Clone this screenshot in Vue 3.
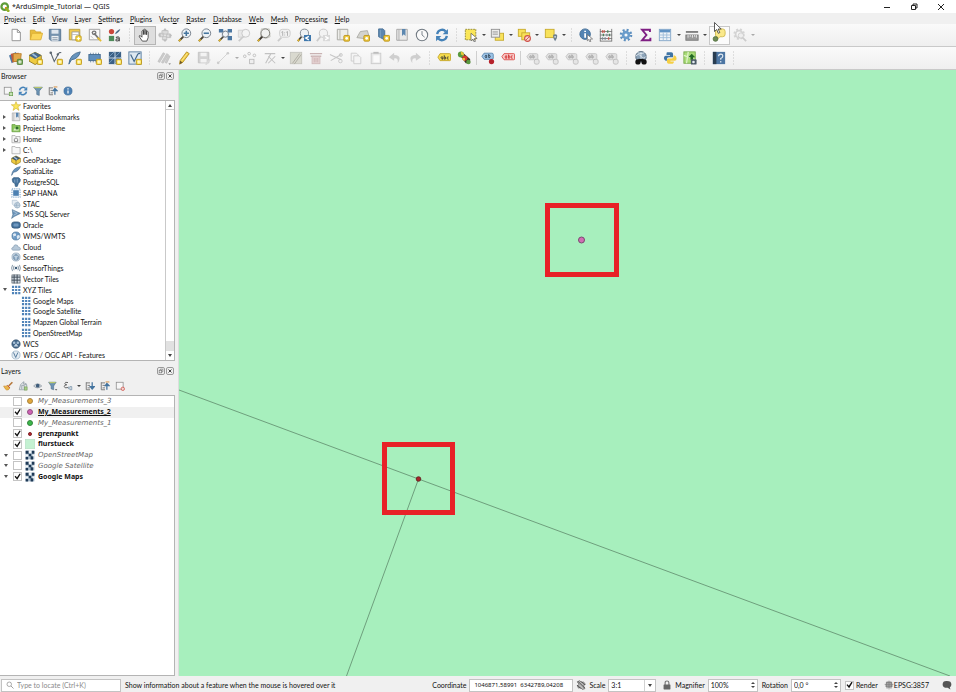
<script setup>
import { ref } from 'vue'

const icons = {
  logo: '<circle cx="7.5" cy="7.5" r="5.200" fill="none" stroke="#5f9c39" stroke-width="3.600"/><path d="M8 8h3l4 5v3h-3l-4-5z" fill="#93b023"/><path d="M8 8h3l-3 3z" fill="#ee7913"/>',
  page: '<path d="M3.5 1.500h6l3.500 3.500v9.500h-9.500z" fill="#fff" stroke="#8a8a8a"/><path d="M9.500 1.500v3.500h3.500" fill="none" stroke="#8a8a8a"/>',
  folder: '<path d="M1.500 13.500v-11h5l1.500 2h5.500v2" fill="#e8bd3d" stroke="#d0a327"/><path d="M1.500 13.500l2-7.500h12l-2 7.500z" fill="#fbd65a" stroke="#dcae33"/>',
  save: '<path d="M1.500 1.500h13v13h-11l-2-2z" fill="#7491ad" stroke="#52718f"/><path d="M4 2h8v4.500h-8z" fill="#dfe6ee"/><path d="M4 9h8v5.500h-8z" fill="#eef1f4"/><path d="M5 11h6M5 13h6" stroke="#8797a8"/>',
  layoutNew: '<path d="M1.500 1.500h12v12h-12z" fill="#efc94e" stroke="#b59a3e"/><path d="M4.500 4.500h8v9h-8z" fill="#fff" stroke="#999"/><path d="M4.500 7.500h8" stroke="#bbb"/><rect x="9" y="9" width="6" height="6" rx="1" fill="#f8dd4c" stroke="#bb9316"/><path d="M12 10v4M10 12h4" stroke="#fff"/>',
  layoutMgr: '<path d="M1.500 1.500h12v12h-12z" fill="#fafafa" stroke="#999"/><path d="M4 5l2 2M3 9l3 3" stroke="#bbb"/><path d="M7 6l6 7" stroke="#777" stroke-width="2"/><circle cx="7" cy="5.500" r="2" fill="none" stroke="#777" stroke-width="1.500"/><path d="M11 11l4 4" stroke="#e5bd33" stroke-width="2"/>',
  style: '<circle cx="4" cy="4" r="3" fill="#c9473b"/><rect x="1" y="9" width="6" height="6" fill="#4e8a5a"/><path d="M8 7q1-4 6-6q-1 4-6 6z" fill="#4b6984"/><path d="M9 11q4-2 4 1v3M13 12.500q-4-.5-4 1.500q1 2 4-.5" fill="none" stroke="#555" stroke-width="1.300"/>',
  hand: '<path d="M5 15l-3.500-5q-.5-2 1.500-1l1.500 1.500v-7q.8-1.500 1.700 0v4-5.500q1-1.500 1.800 0v5.500-5q1-1.300 1.800.2v5-3.500q1.200-1.200 1.800.3v6.500l-1.600 4z" fill="#fff" stroke="#333" stroke-width=".9"/>',
  panSel: '<path d="M4.500 3h7v4h-7zM1.500 6h5v4h-5zM9.500 7h5v4h-5zM5 9.500h5v4h-5z" fill="#dcdcdc" stroke="#c2c2c2"/><path d="M8 0l2.500 3h-5zM8 16l2.500-3h-5zM0 8l3-2.500v5zM16 8.500l-3-2.500v5z" fill="#bdbdbd"/>',
  zoomIn: '<circle cx="9.500" cy="6" r="5" fill="#eef3f7" stroke="#6b7682"/><path d="M6 10l-5 5" stroke="#4a4436" stroke-width="2.200"/><path d="M3 13l-2 2" stroke="#e2b62e" stroke-width="2"/><path d="M9.500 3v6M6.500 6h6" stroke="#44759f" stroke-width="1.800"/>',
  zoomOut: '<circle cx="9.500" cy="6" r="5" fill="#eef3f7" stroke="#6b7682"/><path d="M6 10l-5 5" stroke="#4a4436" stroke-width="2.200"/><path d="M3 13l-2 2" stroke="#e2b62e" stroke-width="2"/><path d="M6.500 6h6" stroke="#44759f" stroke-width="1.800"/>',
  zoomFull: '<rect x="4" y="3" width="9" height="8" fill="#cfdbe7"/><path d="M1 1h5v4h-5zM11 1h5v4h-5zM11 9h5v5h-5z" fill="#4b77a2"/><circle cx="8.500" cy="7" r="3.500" fill="#f0f4f7" stroke="#6b7682"/><path d="M6 10l-5 5" stroke="#4a4436" stroke-width="2"/><path d="M3 13l-2 2" stroke="#e2b62e" stroke-width="2"/>',
  zoomGray: '<path d="M1.500 2.500h7v8h-7z" fill="#e8e8e8" stroke="#d0d0d0"/><circle cx="10" cy="6" r="4.500" fill="#f4f4f4" stroke="#c4c4c4"/><path d="M7 10l-5 5" stroke="#cbcbcb" stroke-width="2"/>',
  zoomLayer: '<path d="M5 1h9l1 9-5 2-6-2z" fill="#e1e1dc" stroke="#c4c4bd"/><circle cx="9.500" cy="6" r="5" fill="#f1f2f0" stroke="#75756f"/><path d="M6 10l-5 5" stroke="#3d3830" stroke-width="2.200"/><path d="M3 13l-2 2" stroke="#e2b62e" stroke-width="2"/>',
  zoomNative: '<rect x="3" y="1.500" width="12" height="9" rx="3" fill="#f1f1f1" stroke="#c9c9c9"/><path d="M5 5l1.500-1v5M10.500 5l1.500-1v5M8.700 5v1M8.700 7.500v1" fill="none" stroke="#aaa"/><path d="M5 11l-4 4" stroke="#cbcbcb" stroke-width="2"/>',
  zoomLast: '<circle cx="8.500" cy="6" r="4.700" fill="#eef1f3" stroke="#77808a"/><path d="M5 10l-4 5" stroke="#4a4436" stroke-width="2"/><path d="M2.500 13l-1.500 2" stroke="#e2b62e" stroke-width="2"/><rect x="8" y="8" width="8" height="7" fill="#3f78ad"/><path d="M13.500 9.500l-3.500 2 3.500 2" fill="none" stroke="#fff" stroke-width="1.500"/>',
  zoomNext: '<circle cx="8.500" cy="6" r="4.700" fill="#f3f3f3" stroke="#c4c4c4"/><path d="M5 10l-4 5" stroke="#cbcbcb" stroke-width="2"/><rect x="8" y="8" width="8" height="7" fill="#d9d9d9"/><path d="M10.500 9.500l3.500 2-3.500 2" fill="none" stroke="#fff" stroke-width="1.500"/>',
  newMap: '<path d="M1.500 1.500h12v12h-12z" fill="#ededea" stroke="#a4a49e"/><path d="M4.500 2v11" stroke="#b0b0aa"/><rect x="9" y="8.500" width="6.500" height="6.500" rx="1" fill="#efcb41" stroke="#b88f17"/><circle cx="12.200" cy="11.800" r="1.500" fill="#fff"/>',
  new3d: '<path d="M1 11l4-7 8-1 2 7-6 2z" fill="#d3d3ce" stroke="#a9a9a3"/><rect x="9" y="8.500" width="6.500" height="6.500" rx="1" fill="#efcb41" stroke="#b88f17"/><circle cx="12.200" cy="11.800" r="1.500" fill="#fff"/>',
  newBm: '<path d="M3 1h5l2 2v11l-3-2-4-2z" fill="#5c87b0" stroke="#456d92"/><path d="M5 2v9" stroke="#7ea3c5"/><rect x="9" y="8.500" width="6.500" height="6.500" rx="1" fill="#efcb41" stroke="#b88f17"/><circle cx="12.200" cy="11.800" r="1.500" fill="#fff"/>',
  bookmark: '<path d="M2 1.500h12v12.500h-12z" fill="#e9e9e9" stroke="#a0a0a0"/><path d="M4.500 2v12" stroke="#aaa"/><path d="M8 1h4v8l-2-2-2 2z" fill="#5c87b0"/>',
  clock: '<circle cx="8" cy="8" r="6.500" fill="#fafafa" stroke="#6f7880" stroke-width="1.200"/><path d="M8 3.500v4.500l3 2.500" fill="none" stroke="#6f7880"/>',
  refresh: '<path d="M2.500 7a5.600 5.600 0 0 1 9.800-3" fill="none" stroke="#4582b8" stroke-width="2.600"/><path d="M14.800 1v6h-6z" fill="#4582b8"/><path d="M13.500 9a5.600 5.600 0 0 1-9.800 3" fill="none" stroke="#4582b8" stroke-width="2.600"/><path d="M1.200 15v-6h6z" fill="#4582b8"/>',
  select: '<rect x="1.500" y="1.500" width="12" height="12" fill="#fae657" stroke="#8d8432" stroke-dasharray="2 1"/><path d="M8 6l7 6-3.500.3 1.500 3-1.500.5-1.200-3-2.300 1.800z" fill="#fff" stroke="#555" stroke-width=".8"/>',
  selForm: '<rect x="6" y="6" width="9.500" height="8" fill="#f8e25a" stroke="#c6a92a"/><rect x="1.500" y="1.500" width="9.500" height="9" fill="#ececec" stroke="#8d8d8d"/><path d="M3 4.500h6M3 7h6" stroke="#8d8d8d"/>',
  deselect: '<rect x="1.500" y="1.500" width="8" height="8" fill="#f8e25a" stroke="#c6a92a"/><rect x="5.500" y="5.500" width="9" height="8" fill="#f8e25a" stroke="#c6a92a"/><circle cx="12" cy="12" r="3.300" fill="#f6d5cf" stroke="#cf4f47" stroke-width="1.200"/><path d="M10 14l4-4" stroke="#cf4f47"/>',
  selLoc: '<rect x="1.500" y="1.500" width="10" height="9.500" fill="#f8e25a" stroke="#c6a92a"/><path d="M10.500 10a2.300 2.300 0 1 1 4.500 0q0 2-2.300 5q-2.200-3-2.200-5z" fill="#6c7f8f"/><circle cx="12.700" cy="10" r="1" fill="#dfe5ea"/>',
  identify: '<circle cx="7" cy="7" r="6" fill="#5484b3" stroke="#3f6a94"/><path d="M7 6v5M7 3v1.700" stroke="#fff" stroke-width="2"/><path d="M9.500 7.500l6 5-3 .3 1 2.500-1.300.4-1-2.600-1.700 1.600z" fill="#fff" stroke="#666" stroke-width=".8"/>',
  abacus: '<path d="M1.500 1v14M14.500 1v14M1 4h14M1 8h14M1 12h14M1 15h14" stroke="#777"/><path d="M4 2.500v3M6 2.500v3M11 10.500v3" stroke="#c2554a" stroke-width="1.500"/><path d="M10 2.500v3M5 6.500v3M12 6.500v3" stroke="#4c8258" stroke-width="1.500"/><path d="M4 10.500v3M7 10.500v3M9 6.500v3" stroke="#7d8a95" stroke-width="1.500"/>',
  gear: '<circle cx="8" cy="8" r="5.700" fill="none" stroke="#5d8fbf" stroke-width="3" stroke-dasharray="2.200 2.276"/><circle cx="8" cy="8" r="4.800" fill="#6a9ccb"/><circle cx="8" cy="8" r="1.800" fill="#f5f8fa"/>',
  sigma: '<path d="M12.500 4.500v-2.500h-9l5 6-5 6h9.500v-3" fill="none" stroke="#7f1e83" stroke-width="2.200"/>',
  table: '<rect x="1.500" y="1.500" width="13" height="13" fill="#eef3f8" stroke="#7fa3c6"/><path d="M2 3.500h12" stroke="#5f92c3" stroke-width="3"/><path d="M6 5v9M10 5v9M2 8h12M2 11h12" stroke="#9dbbd8"/>',
  ruler: '<path d="M1 4.500h14" stroke="#777" stroke-width="2"/><rect x="1" y="8" width="14" height="6" fill="#9b9b9b" stroke="#777"/><path d="M3.500 8v3M6 8v2M8.500 8v3M11 8v2M13 8v3" stroke="#eee"/>',
  tips: '<path d="M4 3q0-2 2-2h6q3 0 3 3v3q0 3-3 3h-3l-3 3q0-2 0-3q-2 0-2-2z" fill="#fae98b" stroke="#cfb94f"/><circle cx="4" cy="12.500" r="2.700" fill="#6e8b58" stroke="#54713f"/>',
  gearGray: '<circle cx="7" cy="7" r="5.300" fill="none" stroke="#d4d4d4" stroke-width="2.500" stroke-dasharray="2.200 2"/><circle cx="7" cy="7" r="4" fill="none" stroke="#d4d4d4" stroke-width="2"/><circle cx="9" cy="8.500" r="3" fill="#eee" stroke="#ccc"/><path d="M11 11l4 4" stroke="#ccc" stroke-width="2"/>',
  dsm: '<path d="M0 5l8-4 2 9-7 4z" fill="#4f7ba5"/><path d="M2 3l9-1 1 9-8 2z" fill="#c2563e"/><path d="M5 3h9l-1 9h-8z" fill="#e2a74a" stroke="#b8802e"/><rect x="9.500" y="9.500" width="6" height="6" rx="1" fill="#7aa95c" stroke="#4f7f36"/><path d="M12.500 10.500v4M10.500 12.500h4" stroke="#fff"/>',
  gpkg: '<path d="M1 5l7-3.500 7 3.500v6.500l-7 4-7-4z" fill="#efcb41" stroke="#8e771c"/><path d="M1 5l7-3.500 7 3.500-7 4z" fill="#41556a"/><path d="M5 3.500l5 3.500" stroke="#9fc0de" stroke-width="2"/><path d="M8 9v6" stroke="#7a6618"/>',
  gpkgNew: '<path d="M0 5l7-3.500 7 3.500v6.500l-7 4-7-4z" fill="#efcb41" stroke="#8e771c"/><path d="M0 5l7-3.500 7 3.500-7 4z" fill="#47688a"/><path d="M4 3.500l5 3.500" stroke="#9fc0de" stroke-width="2"/><rect x="9.500" y="9.500" width="6" height="6" rx="1" fill="#f8dd4c" stroke="#bb9316"/><path d="M12.500 10.500v4M10.500 12.500h4" stroke="#fff"/>',
  shp: '<path d="M2 2l4 10 5-9q1-2 3-1" fill="none" stroke="#5c6670" stroke-width="1.200"/><circle cx="2" cy="2" r="1.500" fill="#5c6670"/><circle cx="10" cy="4" r="1.300" fill="#5c6670"/><rect x="9.500" y="9.500" width="6" height="6" rx="1" fill="#f8dd4c" stroke="#bb9316"/><path d="M12.500 10.500v4M10.500 12.500h4" stroke="#fff"/>',
  featherNew: '<path d="M1 15q1-12 13-14q-2 8-10 9z" fill="#6794bd" stroke="#41688d"/><rect x="9.500" y="9.500" width="6" height="6" rx="1" fill="#f8dd4c" stroke="#bb9316"/><path d="M12.500 10.500v4M10.500 12.500h4" stroke="#fff"/>',
  feather: '<path d="M1 15q1-12 14-14q-3 8-11 9z" fill="#6794bd" stroke="#41688d"/>',
  chipNew: '<path d="M3 2v11M6 2v11M9 2v11M12 2v11" stroke="#6b8ba9"/><rect x="1" y="4" width="13" height="7" fill="#5f8fbd" stroke="#43698e"/><rect x="9.500" y="9.500" width="6" height="6" rx="1" fill="#f8dd4c" stroke="#bb9316"/><path d="M12.500 10.500v4M10.500 12.500h4" stroke="#fff"/>',
  meshNew: '<rect x="1" y="1" width="14" height="14" fill="#3b6085"/><path d="M1 7l6-6M1 14l13-13M7 15l8-8" stroke="#7ea5c9"/><path d="M8 1v14M1 8h14" stroke="#d8e4ee"/><rect x="9.500" y="9.500" width="6" height="6" rx="1" fill="#f8dd4c" stroke="#bb9316"/><path d="M12.500 10.500v4M10.500 12.500h4" stroke="#fff"/>',
  virtNew: '<rect x="1" y="1" width="14" height="14" fill="#dde8f1" stroke="#50779c"/><path d="M3 4l4 8 4-8q1-2 3-1" fill="none" stroke="#44698d" stroke-width="1.400"/><rect x="9.500" y="9.500" width="6" height="6" rx="1" fill="#f8dd4c" stroke="#bb9316"/><path d="M12.500 10.500v4M10.500 12.500h4" stroke="#fff"/>',
  pencilsGray: '<path d="M1 12l6-10 2 1-6 10zM5 13l6-10 2 1-6 10zM9 13l4-8 2 1-4 8z" fill="#cbcbcb" stroke="#bbb" stroke-width=".7"/><path d="M13 14h3l-1.500 2z" fill="#999"/>',
  pencil: '<path d="M3 15l.5-4 7.500-10 3 2-7.500 10z" fill="#f3cf47" stroke="#b58e22"/><path d="M3 15l.5-4 3 2z" fill="#6e5a2e"/><path d="M5.500 11l6-8" stroke="#fbe89b"/>',
  saveGray: '<path d="M1.500 1.500h12v12h-12z" fill="#d3d3d3" stroke="#c2c2c2"/><path d="M4 2h7v4h-7zM4 9h7v4h-7z" fill="#f3f3f3"/><path d="M9 15l5-6 2 1-5 6z" fill="#d9d9d9"/>',
  lineGray: '<path d="M2 14l12-12" stroke="#d0d0d0"/><circle cx="2.500" cy="13.500" r="1.500" fill="#ccc"/><circle cx="13.500" cy="2.500" r="1.500" fill="#ccc"/>',
  pointsGray: '<circle cx="2" cy="6" r="1.500" fill="none" stroke="#bbb"/><circle cx="7" cy="3" r="1.500" fill="none" stroke="#bbb"/><circle cx="13" cy="5" r="1.500" fill="none" stroke="#bbb"/><rect x="7.500" y="9.500" width="5" height="5" fill="#eee" stroke="#bbb"/>',
  vertexGray: '<path d="M2 3h12M3 14l6-11M6 6l8 8M14 6l-8 8" fill="none" stroke="#c2c2c2" stroke-width="1.200"/>',
  editGray: '<rect x="1.500" y="1.500" width="13" height="13" fill="#d9d9cf" stroke="#c4c4bd"/><path d="M4 14l8-11M6 15l8-11" stroke="#aaa89e"/>',
  trash: '<path d="M1 3h14M2 6h12" stroke="#c9b3b3" stroke-width="1.500"/><rect x="3.500" y="6.500" width="9" height="8" fill="#e6d3d3" stroke="#cfb9b9"/><path d="M6 8v5M8 8v5M10 8v5" stroke="#cdb3b3"/>',
  cut: '<path d="M1 4l13 6M2 11l12-7" stroke="#c6c6c6" stroke-width="1.200"/><circle cx="13" cy="11.500" r="2" fill="none" stroke="#c6c6c6"/><circle cx="13.500" cy="4.500" r="1.700" fill="none" stroke="#c6c6c6"/>',
  copy: '<path d="M2.500 2.500h6l2 2v7h-8z" fill="#f4f4f4" stroke="#cacaca"/><path d="M5.500 5.500h6l2 2v7h-8z" fill="#f4f4f4" stroke="#cacaca"/>',
  paste: '<rect x="2.500" y="2.500" width="11" height="12" fill="#e8e8e8" stroke="#cacaca"/><rect x="5" y="5" width="7" height="8" fill="#fafafa"/><path d="M5 2h6" stroke="#bdbdbd" stroke-width="2"/>',
  undo: '<path d="M7 2l-6 5 6 4v-2.500q5-1 4 5.500q6-9-4-9.500z" fill="#cfcfcf"/>',
  redo: '<path d="M9 2l6 5-6 4v-2.500q-5-1-4 5.500q-6-9 4-9.500z" fill="#cfcfcf"/>',
  label: '<path d="M1 7l2.500-4h11q1 0 1 1v6q0 1-1 1h-11z" fill="#f6dd4d" stroke="#c3a328"/><path d="M4.500 8q0-1.500 1.200-1.500t1.100 1v1.800h-1.300q-1-.6 0-1h1.300M8.300 4.800v4.500h1.200q1-1.200 0-2.500h-1.200M13.300 6.800h-1.300q-1 1.200 0 2.500h1.300" fill="none" stroke="#333" stroke-width=".9"/>',
  diagram: '<path d="M4 6l6 8h5v-5l-7-6z" fill="#3d3020"/><circle cx="4.500" cy="4" r="3.500" fill="#5a9a3f"/><path d="M4.500 4v-3.500a3.500 3.500 0 0 1 3 5z" fill="#eac63b"/><circle cx="9" cy="8" r="3" fill="#d33b2f"/><path d="M9 8v3a3 3 0 0 1-3-3z" fill="#eac63b"/><circle cx="13" cy="12.500" r="2.500" fill="#5a9a3f"/>',
  labPin: '<path d="M1 6l2.500-3.500h9q1.500 0 1.500 1.500v4q0 1.500-1.500 1.500h-9z" fill="#9cc3e6" stroke="#5a86ae"/><path d="M6.500 5h-1.300q-1 1.200 0 2.500h1.300v-2.500M8.800 3.500v4h1.200q1-1 0-2.500h-1.200" fill="none" stroke="#234" stroke-width=".9"/><circle cx="12" cy="12" r="3" fill="#b6222b"/>',
  labRed: '<path d="M1 6.500l2.500-3.500h11q1 0 1 1v5q0 1-1 1h-11z" fill="#f9cac8" stroke="#da4a46"/><path d="M6.500 5.500h-1.300q-1 1.300 0 2.800h1.300v-2.800M8.500 4v4.300h1.200q1-1.200 0-2.800h-1.200M13.300 5.500h-1.300q-1 1.300 0 2.800h1.300" fill="none" stroke="#c22" stroke-width=".9"/>',
  labGray: '<path d="M1 6.500l2.500-3.500h8.500q1.500 0 1.500 1.500v4q0 1.500-1.500 1.500h-8.500z" fill="#e1e1e1" stroke="#c5c5c5"/><path d="M6 5.500h-1.300q-1 1.300 0 2.500h1.300v-2.500M7.800 4v4h1.200q1-1 0-2.500h-1.200" fill="none" stroke="#999" stroke-width=".9"/><rect x="9.500" y="9.500" width="5.500" height="5.500" rx="2" fill="#e5e5e5" stroke="#bdbdbd"/>',
  metasearch: '<circle cx="8" cy="6.500" r="6" fill="#8da4b9" stroke="#53687c"/><path d="M2 6q3-4 6 0t6 0M8 1v11M4 2q4 2 8 0" fill="none" stroke="#dfe8ef"/><circle cx="4.500" cy="12.500" r="3" fill="#111"/><circle cx="11.500" cy="12.500" r="3" fill="#111"/><path d="M5 9h6v3h-6z" fill="#111"/>',
  python: '<path d="M5 1.500h4.500q2 0 2 2v3.500h-5q-2 0-2 2v2h-1.500q-2-1-2-3t2-2.500h5v-1h-4v-1.500q0-1.500 1-1.500z" fill="#3f74a4"/><path d="M11 14.500h-4.500q-2 0-2-2v-2.500q0-1.500 1.500-1.500h4q2 0 2-2v-1.500h1.500q2 1 2 3.500t-2 2.500h-5v1h4q0 2-1.500 2.500z" fill="#f5cf45"/>',
  osmDl: '<rect x="1" y="1" width="13" height="13" fill="#a9dc78" stroke="#74a748"/><path d="M1 5l13 5M6 1l-2 13" stroke="#dff2c9" stroke-width="1.500"/><path d="M10 3l4 4h-2.500v3h-3v-3h-2.500z" fill="#236a24"/><rect x="9" y="9.500" width="6.500" height="6" rx="1" fill="#4a5a66"/><circle cx="12" cy="12.500" r="1.500" fill="#e6ecf0"/>',
  help: '<rect x="1" y="1" width="14" height="14" fill="#4d76a3"/><rect x="1" y="1" width="4" height="14" fill="#283c50"/><path d="M7.500 6q0-2.500 2.500-2.500t2.300 2.500q0 1.500-2.300 2.500v1.500M10 11.500v1.500" fill="none" stroke="#e5edf4" stroke-width="1.300"/>',
  addLayer: '<rect x="2" y="2" width="11" height="11" fill="#f7f7f7" stroke="#8a8a8a" stroke-width="1.200"/><rect x="10" y="10" width="5.500" height="5.500" fill="#c6e3b4" stroke="#5f9442"/>',
  filter: '<path d="M1 2h14l-5 6v7l-4-1.500v-5.500z" fill="#6d93b4" stroke="#4f6f8c"/><path d="M2 2.500h12" stroke="#b9c66a" stroke-width="2"/>',
  collapse: '<path d="M2 2v12M2 3h6M4 7h4M4 11h4M2 14h6" stroke="#777" stroke-width="1.500"/><path d="M11 14v-8M8.500 7.500l2.500-3.500 3.500 3.500z" fill="#44749f" stroke="#44749f" stroke-width="2"/><path d="M9 1.500h6" stroke="#d78d3b" stroke-width="1.500"/>',
  expand: '<path d="M2 2v12M2 3h6M4 7h4M4 11h4M2 14h6" stroke="#777" stroke-width="1.500"/><path d="M11.500 2v8M8.500 9l3 4 3.500-4z" fill="#44749f" stroke="#44749f" stroke-width="2"/>',
  info: '<circle cx="8" cy="8" r="6.500" fill="#4c80b4" stroke="#3d6b99"/><path d="M8 7v5M8 3.500v2" stroke="#fff" stroke-width="2"/>',
  star: '<path d="M8 1l2 5h5.500l-4.500 3.300 1.700 5.700-4.700-3.400-4.700 3.400 1.700-5.700-4.500-3.300h5.500z" fill="#fbe65c" stroke="#d0b22e"/>',
  projHome: '<path d="M1.500 14v-11.500h5l1 1.500h7v10z" fill="#8dc95f" stroke="#599030"/><path d="M4 11l4-5 4 4v2h-8z" fill="#dff0cd"/><circle cx="9.500" cy="8" r="2.500" fill="#2f6e2a"/>',
  home: '<path d="M1.500 14v-11.500h5l1 1.500h7v10z" fill="#f5f5f5" stroke="#999"/><path d="M4.500 9l3.500-3 3.500 3M5.500 9v3h5v-3" fill="none" stroke="#666" stroke-width="1.200"/>',
  drive: '<path d="M1.500 14v-11.500h5l1 1.500h7v10z" fill="#f7f7f7" stroke="#999"/>',
  postgres: '<path d="M2 3q2-3 6-2q6-1 7 3q0 4-3 6l-2 5h-3l-1-5q-4 0-4-7z" fill="#46739d" stroke="#2f567b"/><path d="M6 4v5M10 3v6" stroke="#9fbdd7"/>',
  hana: '<rect x="1.500" y="1.500" width="13" height="13" fill="none" stroke="#8fb2d3" stroke-width="2" stroke-dasharray="2 1.500"/><rect x="3.500" y="3.500" width="9" height="9" fill="#4b80b2"/>',
  stac: '<path d="M2 2h7l3 3v6h-7l-3-3z" fill="#e6edf3" stroke="#a8bccd"/><circle cx="10" cy="10" r="4.500" fill="#ccd9e4" stroke="#8ba5bc"/><path d="M6 10h8M10 6q-3 4 0 8" fill="none" stroke="#8ba5bc"/>',
  mssql: '<path d="M2 1l13 6-10 5-4 3 2-6z" fill="#6b94b9" stroke="#4d7395"/><path d="M3 3l7 4-6 3" fill="none" stroke="#bfd2e2"/>',
  oracle: '<rect x="1" y="3" width="14" height="10" rx="4" fill="#44719c" stroke="#2d4f70"/><rect x="4" y="5.500" width="8" height="5" rx="2" fill="#6f98bf"/>',
  globe: '<circle cx="8" cy="8" r="6.500" fill="#6b98c4" stroke="#4c7499"/><path d="M3 5q4-3 5 0t-3 3v4M9 8q4-3 5 0t-4 5z" fill="#dfe9f2"/>',
  cloud: '<path d="M3 13q-3-1-1.500-3.500q1-1.500 2.500-1q0-4 3.500-4t4 3.500q3 0 3.500 2.500t-2 2.500z" fill="#b6c8d8" stroke="#7f97ac"/>',
  scenes: '<circle cx="8" cy="8" r="6.500" fill="#c3d2e0" stroke="#88a0b6"/><path d="M4.500 6l3.500-2 3.500 2v5l-3.500 2-3.500-2z" fill="#93b1cc" stroke="#52718d"/><path d="M4.500 6l3.500 2 3.500-2M8 8v5" fill="none" stroke="#eef3f7"/>',
  sensor: '<circle cx="8" cy="8" r="2" fill="#3f5d78"/><path d="M5 4.500q-2 3.500 0 7M11 4.500q2 3.500 0 7M2.500 3q-3 5 0 10M13.500 3q3 5 0 10" fill="none" stroke="#6c8194" stroke-width="1.300"/>',
  vtiles: '<rect x="1.500" y="1.500" width="13" height="13" fill="#d5dde4" stroke="#414d58"/><path d="M5 1v14M9.800 1v14M1 5h14M1 9.800h14" stroke="#414d58" stroke-width="1.600"/>',
  xyz: '<path d="M1.500 3h3.500M6.500 3h3.500M11.500 3h3.500M1.500 8h3.500M6.500 8h3.500M11.500 8h3.500M1.500 13h3.500M6.500 13h3.500M11.500 13h3.500" stroke="#4f83b8" stroke-width="3.500"/>',
  wcs: '<circle cx="8" cy="8" r="6.700" fill="#44678a" stroke="#33506c"/><circle cx="5" cy="6" r="2" fill="#a9c2d9"/><circle cx="11" cy="6" r="2" fill="#a9c2d9"/><path d="M4 12l4-5 4 5z" fill="#c7d8e6"/>',
  wfs: '<circle cx="8" cy="8" r="6.500" fill="#e3ebf2" stroke="#8aa6bf"/><path d="M4 4l3.500 8 3.500-8" fill="none" stroke="#4f7597" stroke-width="1.500"/>',
  brush: '<path d="M15 2l-6 6" stroke="#b5773a" stroke-width="2.500"/><path d="M1 8q4 1 6-1l4 4q-2 4-5 3.500q-3-1.500-5-6.500z" fill="#e9b64c" stroke="#c98a2b"/><path d="M7 7l4 4" stroke="#c24b3c" stroke-width="1.500"/>',
  group: '<path d="M2 14l2-8 5-5v4l5 1v8z" fill="#dfe3e6" stroke="#7d8b97"/><path d="M6 13v-6h4v6M10 3l4 2" fill="none" stroke="#7d8b97"/><rect x="10.500" y="9.500" width="4" height="5" fill="#a9cf8c" stroke="#77a355"/>',
  eye: '<path d="M1 8q6-7 13 0q-7 6-13 0z" fill="#d7dde2" stroke="#7c8790"/><circle cx="7.500" cy="7.500" r="3" fill="#3f5d7b"/><path d="M11 13h4l-2 2z" fill="#444"/>',
  filterDd: '<path d="M1 2h12l-4 6v6l-4-1.500v-4.500z" fill="#6d93b4" stroke="#4f6f8c"/><path d="M2 2.500h10" stroke="#b9c66a" stroke-width="2"/><path d="M11 13h4l-2 2z" fill="#444"/>',
  expr: '<path d="M8 2.500q-5-1.500-5 1.500q0 2 3 2q-4 0-4 3t6 1.500" fill="none" stroke="#555" stroke-width="1.400"/><path d="M9 9v4M11 9h3v5h-3z" fill="none" stroke="#6d8ba6" stroke-width="1.200"/>',
  remove: '<rect x="2" y="2" width="11" height="11" fill="#f7f7f7" stroke="#8a8a8a" stroke-width="1.200"/><circle cx="12.500" cy="12.500" r="2.700" fill="#f3d4d0" stroke="#cf4f47" stroke-width="1.200"/>',
  raster: '<rect x="1" y="1" width="14" height="14" fill="#a9bccd"/><path d="M1 1h5v5h-5zM6 6h4v4h-4zM11 1h4v5h-4zM1 11h4v4h-4zM9 10h4v5h-4z" fill="#1f3a56"/><path d="M6 1h4v4h-4zM1 7h4v3h-4zM12 7h3v3h-3z" fill="#f3f6f8"/>',
  mag: '<circle cx="6.500" cy="6.500" r="4.500" fill="none" stroke="#888" stroke-width="1.400"/><path d="M10 10l5 5" stroke="#888" stroke-width="1.600"/>',
  extents: '<path d="M2 3l4-2 3 3 3-1 3 4-3 2 2 5-4 1-3-3-3 1-2-4 3-2z" fill="#bbb" stroke="#555"/><path d="M3 2l11 11M2 8l6 6M8 2l6 6" stroke="#333" stroke-width="1.300"/>',
  lock: '<path d="M5 8v-3.500q0-3 3-3t3 3v3.500" fill="none" stroke="#777" stroke-width="1.800"/><rect x="2.500" y="7" width="11" height="8" rx="1" fill="#666"/>',
  crs: '<path d="M8 2a5.500 5.500 0 1 0 .1 0z" fill="#a8a8a8"/><path d="M1 7h14M2 10h12M3 4h10M8 1v14M5 2q-3 6 0 12M11 2q3 6 0 12" fill="none" stroke="#777"/>',
  bubble: '<path d="M8 1.500q7 0 7 5.500q0 3-2.500 4.500l1 3.500-4.500-2.500q-8 .5-8-5.500t7-5.500z" fill="#555"/>',
  float: '<path d="M6 6v-3h7v7h-3" fill="none" stroke="#666" stroke-width="1.600"/><rect x="3" y="6" width="7" height="7" fill="none" stroke="#666" stroke-width="1.600"/>',
  close: '<path d="M4 4l8 8M12 4l-8 8" stroke="#333" stroke-width="2.400"/>',
}

const menus = [
  ['P', 'roject', ''], ['E', 'dit', ''], ['V', 'iew', ''], ['L', 'ayer', ''], ['S', 'ettings', ''], ['P', 'lugins', ''],
  ['o', 'r', 'Vect'], ['R', 'aster', ''], ['D', 'atabase', ''], ['W', 'eb', ''], ['M', 'esh', ''], ['c', 'essing', 'Pro'], ['H', 'elp', ''],
]

const toolbars = [
  'page folder save layoutNew layoutMgr style | hand panSel zoomIn zoomOut zoomFull zoomGray zoomLayer zoomNative zoomLast zoomNext newMap new3d newBm bookmark clock refresh | select v selForm v deselect v selLoc v | identify abacus gear sigma table v ruler v tips gearGray w',
  'dsm gpkgNew shp featherNew chipNew meshNew virtNew | pencilsGray pencil saveGray lineGray w pointsGray vertexGray v editGray trash cut copy paste undo redo | label diagram / labPin labRed / labGray labGray labGray labGray labGray | metasearch | python osmDl | help |',
].map((row) => row.split(' '))

const kinds = { '|': 'grip', '/': 'divider', v: 'drop', w: 'drop faded' }

const browserTools = ['addLayer', 'refresh', 'filter', 'collapse', 'info']
const sources = [
  ['Favorites', 'star'], ['Spatial Bookmarks', 'bookmark', 'closed'], ['Project Home', 'projHome', 'closed'],
  ['Home', 'home', 'closed'], ['C:\\', 'drive', 'closed'], ['GeoPackage', 'gpkg'], ['SpatiaLite', 'feather'],
  ['PostgreSQL', 'postgres'], ['SAP HANA', 'hana'], ['STAC', 'stac'], ['MS SQL Server', 'mssql'], ['Oracle', 'oracle'],
  ['WMS/WMTS', 'globe'], ['Cloud', 'cloud'], ['Scenes', 'scenes'], ['SensorThings', 'sensor'], ['Vector Tiles', 'vtiles'],
  ['XYZ Tiles', 'xyz', 'open'], ['Google Maps', 'xyz', 'child'], ['Google Satellite', 'xyz', 'child'],
  ['Mapzen Global Terrain', 'xyz', 'child'], ['OpenStreetMap', 'xyz', 'child'], ['WCS', 'wcs'], ['WFS / OGC API - Features', 'wfs'],
]

const layerTools = ['brush', 'group', 'eye', 'filterDd', 'expr', 'v', 'expand', 'collapse', 'remove']
const dot = (fill, edge, r = 4) => `<circle cx="8" cy="8" r="${r}" fill="${fill}" stroke="${edge}" stroke-width="1.500"/>`
const layers = ref([
  { name: 'My_Measurements_3', on: false, art: dot('#e3a93c', '#a5803a') },
  { name: 'My_Measurements_2', on: true, art: dot('#cf62b4', '#8b4a7c'), current: true },
  { name: 'My_Measurements_1', on: false, art: dot('#3cb84a', '#2f7f38') },
  { name: 'grenzpunkt', on: true, art: dot('#b5222c', '#7d2a2c', 2.5) },
  { name: 'flurstueck', on: true, art: '<rect x="0.500" y="0.500" width="15" height="15" fill="#c4f1d2" stroke="#b4dfc2"/>' },
  { name: 'OpenStreetMap', on: false, art: icons.raster, open: true },
  { name: 'Google Satellite', on: false, art: icons.raster, open: true },
  { name: 'Google Maps', on: true, art: icons.raster, open: true },
])

const coordinate = ref('1046871,58991  6342789,04208')
const magnifier = ref('100%')
const rotation = ref('0,0 °')
const render = ref(true)
</script>

<template>
  <div class="window">
    <header class="titlebar">
      <svg class="ico" viewBox="0 0 16 16" v-html="icons.logo"></svg>
      <h1>*ArduSimple_Tutorial — QGIS</h1>
      <div class="caption">
        <button aria-label="Minimize"><svg viewBox="0 0 8 8"><path d="M1 4.500h6" /></svg></button>
        <button aria-label="Restore"><svg viewBox="0 0 8 8"><path d="M1.500 2.500h4v4h-4zM3 2.500v-1.500h4v4h-1.500" /></svg></button>
        <button aria-label="Close"><svg viewBox="0 0 8 8"><path d="M1 1l6 6M7 1l-6 6" /></svg></button>
      </div>
    </header>

    <nav class="menubar">
      <button v-for="m in menus" :key="m.join('')">{{ m[2] }}<u>{{ m[0] }}</u>{{ m[1] }}</button>
    </nav>

    <div v-for="(bar, b) in toolbars" :key="b" class="toolbar">
      <div class="tools" :class="{ short: b === 1 }">
        <template v-for="(t, i) in bar" :key="i">
          <span v-if="kinds[t]" :class="kinds[t]"></span>
          <button v-else class="tool" :class="{ pressed: t === 'hand', hover: t === 'tips' }" :aria-label="t">
            <svg viewBox="0 0 16 16" v-html="icons[t]"></svg>
            <svg v-if="t === 'tips'" class="pointer" viewBox="0 0 8 12"><path d="M.5.500v9l2.200-2 1.600 3.800 1.500-.7-1.600-3.600h3z" fill="#fff" stroke="#333" stroke-width=".8" /></svg>
          </button>
        </template>
      </div>
    </div>

    <main class="work">
      <aside class="docks">
        <section class="dock browser">
          <header class="dock-head">
            <h2>Browser</h2>
            <button aria-label="Float Browser"><svg viewBox="0 0 16 16" v-html="icons.float"></svg></button>
            <button aria-label="Close Browser"><svg viewBox="0 0 16 16" v-html="icons.close"></svg></button>
          </header>
          <div class="dock-tools">
            <button v-for="t in browserTools" :key="t" :aria-label="t"><svg viewBox="0 0 16 16" v-html="icons[t]"></svg></button>
          </div>
          <div class="tree-box">
            <ul class="tree">
              <li v-for="s in sources" :key="s[0]" :class="s[2]">
                <i class="twist"></i>
                <svg viewBox="0 0 16 16" v-html="icons[s[1]]"></svg>
                <span>{{ s[0] }}</span>
              </li>
            </ul>
            <div class="scroll">
              <button class="up" aria-label="Scroll up"></button>
              <span class="track"></span>
              <button class="down" aria-label="Scroll down"></button>
            </div>
          </div>
        </section>

        <section class="dock layers">
          <header class="dock-head">
            <h2>Layers</h2>
            <button aria-label="Float Layers"><svg viewBox="0 0 16 16" v-html="icons.float"></svg></button>
            <button aria-label="Close Layers"><svg viewBox="0 0 16 16" v-html="icons.close"></svg></button>
          </header>
          <div class="dock-tools">
            <template v-for="t in layerTools" :key="t">
              <span v-if="t === 'v'" class="drop"></span>
              <button v-else :aria-label="t"><svg viewBox="0 0 16 16" v-html="icons[t]"></svg></button>
            </template>
          </div>
          <div class="tree-box fill">
            <ul class="layer-list">
              <li v-for="l in layers" :key="l.name" :class="{ open: l.open, current: l.current, off: !l.on }">
                <i class="twist"></i>
                <label>
                  <input v-model="l.on" type="checkbox" />
                  <svg viewBox="0 0 16 16" v-html="l.art"></svg>
                  <span>{{ l.name }}</span>
                </label>
              </li>
            </ul>
          </div>
        </section>
      </aside>

      <svg class="map" viewBox="0 0 777 606" preserveAspectRatio="xMinYMin slice" role="img" aria-label="Map canvas">
        <rect width="777" height="606" fill="#a7efbd" />
        <path d="M0 320L239.500 409L771 606M239.500 409L167.500 606" fill="none" stroke="#5f8a6c" stroke-width=".8" />
        <circle cx="239.500" cy="409" r="2.300" fill="#a8242a" stroke="#5a1d1c" stroke-width=".8" />
        <circle cx="402.500" cy="170" r="3" fill="#cf6fb3" stroke="#7a4a70" />
        <rect x="205.500" y="374.500" width="68" height="68" fill="none" stroke="#e82127" stroke-width="5" />
        <rect x="368.500" y="135.500" width="69" height="69" fill="none" stroke="#e82127" stroke-width="5" />
      </svg>
    </main>

    <footer class="status">
      <label class="field locate">
        <svg viewBox="0 0 16 16" v-html="icons.mag"></svg>
        <input type="text" placeholder="Type to locate (Ctrl+K)" aria-label="Locator" />
      </label>
      <p>Show information about a feature when the mouse is hovered over it</p>
      <label for="coord">Coordinate</label>
      <input id="coord" v-model="coordinate" class="field coord" type="text" />
      <button class="plain" aria-label="Toggle extents"><svg viewBox="0 0 16 16" v-html="icons.extents"></svg></button>
      <label for="scale">Scale</label>
      <span class="field scale">
        <select id="scale"><option>3:1</option></select>
        <i class="combo"></i>
      </span>
      <button class="plain lock" aria-label="Lock scale"><svg viewBox="0 0 16 16" v-html="icons.lock"></svg></button>
      <label for="mag">Magnifier</label>
      <span class="field spin"><input id="mag" v-model="magnifier" type="text" /><i class="steps"></i></span>
      <label for="rot">Rotation</label>
      <span class="field spin"><input id="rot" v-model="rotation" type="text" /><i class="steps"></i></span>
      <label class="render"><input v-model="render" type="checkbox" />Render</label>
      <button class="plain crs"><svg viewBox="0 0 16 16" v-html="icons.crs"></svg>EPSG:3857</button>
      <button class="plain msg" aria-label="Messages"><svg viewBox="0 0 16 16" v-html="icons.bubble"></svg></button>
    </footer>
  </div>
</template>

<style>
body {
  margin: 0;
  overflow: hidden;
}
</style>

<style scoped>
.window {
  display: flex;
  flex-direction: column;
  height: 100vh;
  background: #f0f0f0;
  color: #111;
  font: 7px/10px Lato, "Noto Sans", sans-serif;
}
.window * {
  box-sizing: border-box;
}
button {
  display: flex;
  align-items: center;
  justify-content: center;
  padding: 0;
  border: 0;
  background: none;
  color: inherit;
  font: inherit;
}
input,
select {
  min-width: 0;
  margin: 0;
  padding: 0;
  border: 0;
  outline: 0;
  background: none;
  color: inherit;
  font: inherit;
}
svg {
  display: block;
  flex: none;
}
h1,
h2,
p,
ul {
  margin: 0;
  padding: 0;
  font: inherit;
  list-style: none;
}
.titlebar {
  display: flex;
  align-items: center;
  flex: none;
  height: 13px;
  padding-right: 2px;
  gap: 2px;
  background: #fff;
}
.titlebar .ico {
  width: 10px;
  height: 10px;
}
.titlebar h1 {
  flex: 1;
  font-family: "Noto Sans", sans-serif;
}
.caption {
  display: flex;
}
.caption button {
  width: 27px;
  height: 11px;
}
.caption svg {
  width: 8px;
  height: 8px;
  fill: none;
  stroke: #222;
  stroke-width: 1;
}
.menubar {
  display: flex;
  flex: none;
  height: 11px;
  padding-left: 4px;
  gap: 7px;
}
.toolbar {
  flex: none;
  height: 23px;
  padding-left: 1px;
  border-bottom: 1px solid #c9c9c9;
  background: linear-gradient(#fafafa, #efefef);
}
.tools {
  display: flex;
  align-items: center;
  width: 756px;
  height: 22px;
  padding-left: 5px;
}
.tools.short {
  width: 737px;
}
.tool {
  position: relative;
  flex: 198 0 0;
  height: 19px;
}
.tool > svg {
  width: 14px;
  height: 14px;
}
.tool.pressed {
  border: 1px solid #b5b5b5;
  background: #dedede;
}
.tool.hover {
  border: 1px solid #c8c8c8;
  background: #fbfbfb;
}
.tool > .pointer {
  position: absolute;
  top: -5px;
  left: 4px;
  width: 8px;
  height: 12px;
}
.tools .grip {
  flex: 93 0 0;
  height: 14px;
  background: radial-gradient(#c4c4c4 30%, transparent 40%) center / 3px 3px repeat-y;
}
.tools .divider {
  flex: 45 0 0;
  height: 14px;
  background: linear-gradient(#cfcfcf, #cfcfcf) center / 1px 100% no-repeat;
}
.tools .drop {
  flex: 68 0 0;
}
.drop {
  display: flex;
  justify-content: center;
}
.drop::after {
  content: "";
  border: 2px solid transparent;
  border-top-color: #444;
  border-bottom: 0;
}
.drop.faded::after {
  border-top-color: #aaa;
}
.work {
  display: flex;
  flex: 1;
  min-height: 0;
}
.docks {
  display: flex;
  flex: none;
  flex-direction: column;
  width: 179px;
  padding-right: 3px;
  border-right: 1px solid #ddd;
}
.dock {
  display: flex;
  flex-direction: column;
}
.dock-head {
  display: flex;
  align-items: center;
  height: 12px;
  padding: 0 1px;
  gap: 1px;
}
.dock-head h2 {
  flex: 1;
}
.dock-head button {
  width: 8px;
  height: 8px;
  border: 1px solid #999;
  border-radius: 2px;
}
.dock-head svg {
  width: 6px;
  height: 6px;
}
.dock-tools {
  display: flex;
  align-items: center;
  height: 18px;
  padding-left: 3px;
  gap: 5px;
}
.dock-tools button {
  width: 10px;
  height: 10px;
}
.dock-tools svg {
  width: 10px;
  height: 10px;
}
.dock-tools .drop {
  width: 2px;
}
.tree-box {
  display: flex;
  border: 1px solid #b4b4b4;
  border-left: 0;
  background: #fff;
}
.layers {
  flex: 1;
  padding-top: 4px;
}
.tree-box.fill {
  flex: 1;
  align-items: flex-start;
}
.tree {
  display: grid;
  flex: 1;
  grid-auto-rows: 1fr;
  height: 259px;
}
.tree li,
.layer-list li,
.layer-list label {
  display: flex;
  align-items: center;
}
.tree li {
  min-height: 0;
  white-space: nowrap;
}
.tree svg {
  width: 10px;
  height: 10px;
  margin: 0 2px 0 1px;
}
.tree .child {
  padding-left: 10px;
}
.twist {
  display: flex;
  flex: none;
  justify-content: center;
  width: 10px;
}
.closed .twist::after {
  content: "";
  margin-right: 2px;
  border: 2px solid transparent;
  border-left: 3px solid #555;
  border-right: 0;
}
.open .twist::after {
  content: "";
  margin-right: 1px;
  border: 2px solid transparent;
  border-top: 3px solid #555;
  border-bottom: 0;
}
.scroll {
  display: flex;
  flex-direction: column;
  width: 9px;
  border-left: 1px solid #c9c9c9;
  background: #fff;
}
.scroll button {
  height: 9px;
}
.scroll .up {
  border-bottom: 1px solid #c9c9c9;
}
.scroll .up::after {
  content: "";
  border: 2px solid transparent;
  border-top: 0;
  border-bottom: 3px solid #444;
}
.scroll .down::after {
  content: "";
  border: 2px solid transparent;
  border-bottom: 0;
  border-top: 3px solid #444;
}
.track {
  flex: 1;
  border-bottom: 10px solid #e1e1e1;
}
.layer-list {
  display: grid;
  flex: 1;
  grid-auto-rows: 1fr;
  height: 86px;
}
.layer-list .twist {
  width: 13px;
}
.layer-list label {
  gap: 3px;
  font-family: "Noto Sans", sans-serif;
  font-weight: bold;
}
.layer-list svg {
  width: 10px;
  height: 10px;
}
.layer-list .off span {
  color: #666;
  font-family: "DejaVu Sans", sans-serif;
  font-style: italic;
  font-weight: normal;
}
.layer-list .current {
  background: #f0f0f0;
}
.layer-list .current span {
  text-decoration: underline;
}
input[type="checkbox"] {
  flex: none;
  width: 9px;
  height: 9px;
  border: 1px solid #c4c4c4;
  background: #fff;
  appearance: none;
}
input[type="checkbox"]:checked::after {
  content: "";
  display: block;
  width: 7px;
  height: 7px;
  background: #111;
  clip-path: polygon(8% 50%, 24% 38%, 42% 62%, 80% 4%, 96% 14%, 46% 96%);
}
.map {
  flex: 1;
  width: 0;
  height: 100%;
}
.status {
  display: flex;
  align-items: center;
  flex: none;
  height: 16px;
  padding: 2px 4px 0 1px;
  gap: 3px;
  white-space: nowrap;
}
.status p {
  flex: 1;
  padding-left: 1px;
}
.status svg {
  width: 10px;
  height: 10px;
}
.field {
  display: flex;
  align-items: center;
  height: 13px;
  border: 1px solid #c3c3c3;
  background: #fff;
}
.field input {
  flex: 1;
  width: 0;
}
.locate {
  width: 120px;
  padding: 0 4px;
  gap: 3px;
}
.locate svg {
  width: 8px;
  height: 8px;
}
.locate input::placeholder {
  color: #8a8a8a;
}
.coord {
  width: 104px;
  padding-left: 4px;
  border: 1px solid #c3c3c3;
  background: #fff;
  font: 6px/10px "Noto Sans", sans-serif;
  white-space: pre;
}
.scale {
  width: 48px;
  margin-right: 3px;
  padding-left: 2px;
}
.scale select {
  flex: 1;
  appearance: none;
}
.combo {
  display: flex;
  align-items: center;
  justify-content: center;
  width: 11px;
  height: 11px;
  border-left: 1px solid #d2d2d2;
}
.combo::after {
  content: "";
  border: 2px solid transparent;
  border-top: 3px solid #444;
  border-bottom: 0;
}
.spin {
  width: 50px;
  margin-right: 1px;
  padding-left: 2px;
}
.steps {
  display: flex;
  flex-direction: column;
  align-items: center;
  justify-content: center;
  width: 8px;
  gap: 2px;
}
.steps::before,
.steps::after {
  content: "";
  border: 2px solid transparent;
}
.steps::before {
  border-top: 0;
  border-bottom-color: #444;
}
.steps::after {
  border-bottom: 0;
  border-top-color: #444;
}
.render {
  display: flex;
  align-items: center;
  gap: 2px;
}
.crs {
  margin: 0 10px 0 3px;
}
</style>
